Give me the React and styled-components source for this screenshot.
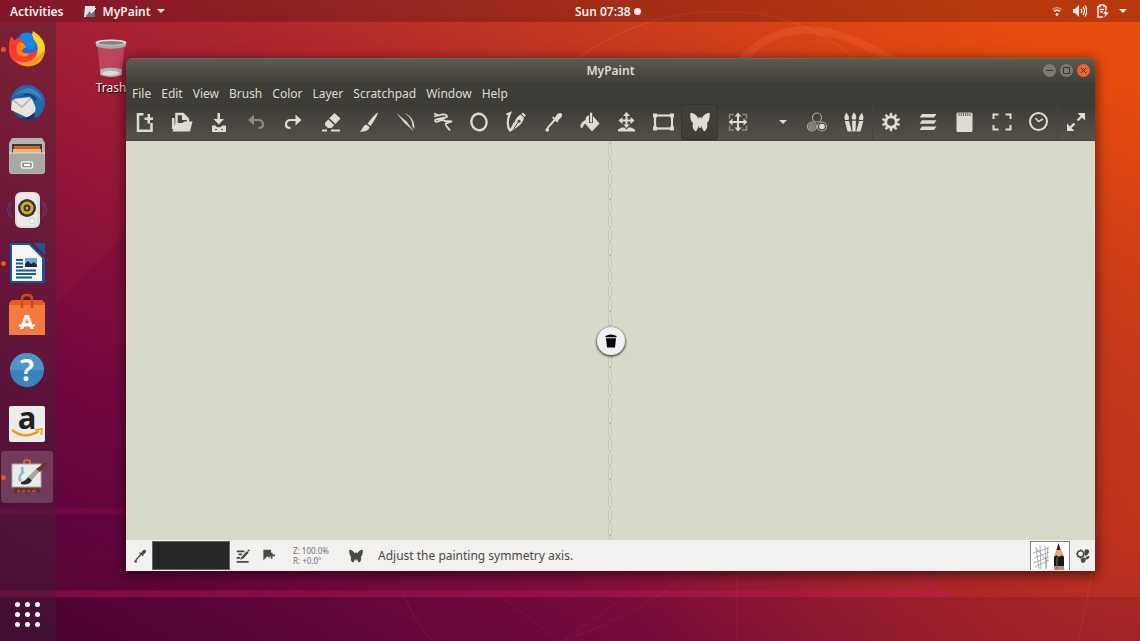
import styled, { createGlobalStyle } from "styled-components";

const GlobalStyle = createGlobalStyle`
  * {
    box-sizing: border-box;
  }
  body {
    margin: 0;
    font-family: "Noto Sans", "Open Sans", sans-serif;
    font-size: 12px;
    overflow: hidden;
  }
  button {
    font: inherit;
    color: inherit;
    padding: 0;
    border: 0;
    background: none;
    cursor: pointer;
  }
  svg {
    display: block;
    flex: none;
  }
`;

/* ---------- toolbar icons, 20x20 ---------- */

const Stroke = (props) => (
  <g fill="none" stroke="currentColor" strokeWidth="2" {...props} />
);

const icons = {
  newFile: (
    <>
      <Stroke strokeWidth="2.500">
        <path d="M8.500 2.200H3V18.800H16.500V11" />
      </Stroke>
      <path d="M9.500 5.500h3v-3.500h2.500v3.500h3v2.500h-3v3.500h-2.500v-3.500h-3z" />
    </>
  ),
  open: (
    <>
      <Stroke strokeWidth="2.400">
        <path d="M4.500 14V2H11L16 7V10" />
      </Stroke>
      <path d="M10 1.500V8H16.500ZM0 6H2.500V17H0ZM3.500 11H10.500L12 9.500H20.500L18 19.500H0.500Z" />
    </>
  ),
  save: (
    <>
      <path d="M8.500 1h2.500v6h4l-5.200 5.500L4.500 7h4z" />
      <path d="M3 13.500H6.500l1.500 1.800h3.500L13.500 13.500H17v6.500H3Z" />
      <path d="M6 17.500h2M12 17.500h2" stroke="#55524a" strokeWidth="1.200" />
    </>
  ),
  undo: (
    <>
      <Stroke strokeWidth="2.200">
        <path d="M5 8H12C15.500 8 17 10 17 12.500S15.500 16 12.500 16" />
      </Stroke>
      <path d="M2 8L8 2.500V13.500Z" />
    </>
  ),
  redo: (
    <>
      <Stroke strokeWidth="2.200">
        <path d="M15 8H8C4.500 8 3 10 3 12.500S4.500 16 7.500 16" />
      </Stroke>
      <path d="M18.500 8L12.500 2.500V13.500Z" />
    </>
  ),
  eraser: (
    <>
      <path d="M14.500 1L20.500 6.500L15.500 12L9.200 6.300ZM8.200 7.500L14.200 13.100L11.600 16H8L5 13.200V11Z" />
      <path d="M2 17.500h5v2H2zM11 17.500h9v2h-9z" />
    </>
  ),
  brush: (
    <path d="M20.600 0.500L21 0.900C19.500 5 16.500 10 13.500 14L10.500 11.700C13.500 7.500 17 3 20.600 0.500ZM9.300 12.500L12.500 15C12 18.500 7.500 20.300 2.500 19.500C5.500 18.500 5.400 13.500 9.300 12.500Z" />
  ),
  lineCurve: (
    <>
      <path d="M2.500 1L12.500 9.500L20 19.500L10.500 11Z" />
      <path d="M10 1C17 3.500 20.800 9 20.500 17L18.500 14.500C18.500 9 16 4.500 10 1Z" />
    </>
  ),
  connected: (
    <Stroke strokeWidth="1.800" strokeLinejoin="round">
      <path d="M3 1.500L8.500 3.500M3 4.500L11 2.500C15 2 18 4.500 14.500 5.500L5 7.500C3 8.500 4.500 10.500 7 9.500C10 8 12 7 14 9L20.500 9.500L15 11.500C13.500 13 17 15.500 19 18.500" />
    </Stroke>
  ),
  ellipse: (
    <Stroke strokeWidth="2.400">
      <ellipse cx="11" cy="10" rx="7.600" ry="8.300" transform="rotate(-15 11 10)" />
    </Stroke>
  ),
  ink: (
    <>
      <Stroke strokeWidth="2.200">
        <path d="M1.500 2.500L5 1.200C2 8 2 15 5 18.500C7 18 7.500 15 9.500 11" />
      </Stroke>
      <path d="M17.800 0.500L21 3.500L19.600 5L16.400 2ZM15.500 2.500L19 5.800C18 11 15 14 7.200 18.500C9 12 9.500 6 15.500 2.500Z" />
      <path d="M8.500 17L13 10.500" stroke="#4b4942" strokeWidth="1" />
      <circle cx="14" cy="9.300" r="1.500" fill="#4b4942" />
    </>
  ),
  picker: (
    <g>
      <path d="M12.500 6.500C14 4 15.300 1 18.300 1C21 1.200 20.500 4.500 18.500 6.200L16 8.200L16.700 9L15.100 10.500L10 5.800L11.500 4.300Z" />
      <path
        d="M13 7.500L6.200 15.200L5 18"
        fill="none"
        stroke="currentColor"
        strokeWidth="2"
      />
      <circle cx="5.200" cy="18" r="1.800" />
    </g>
  ),
  fill: (
    <>
      <path d="M7 5L10 3V11H14V4L20.500 11.500L13 19.500L6 11.500L4.300 14C3.500 17 1 16.500 1.500 13.500C2 10.500 4 9.500 6.500 8Z" />
      <rect x="11" y="0.500" width="2.200" height="10" rx="1" />
    </>
  ),
  moveLayer: (
    <>
      <Stroke strokeWidth="2">
        <path d="M10.500 3V14M5 8.500H16" />
      </Stroke>
      <path d="M10.500 0l3.500 4h-7zM10.500 16l-3-3.500h6zM2.500 8.500l4-3.500v7zM18.500 8.500l-4-3.500v7zM2 19.500V17.500L6 15.500H8.500L10.500 17.500L12.500 15.500H15L19 17.500V19.500Z" />
    </>
  ),
  frame: (
    <>
      <Stroke strokeWidth="2.200">
        <rect x="2" y="3.500" width="17" height="13" />
      </Stroke>
      <path d="M0 1.500h4v4H0zM17 1.500h4v4h-4zM0 14.500h4v4H0zM17 14.500h4v4h-4z" />
    </>
  ),
  symmetry: (
    <path d="M0.400 1C3.500 0.600 7 3 8.600 7.200L8.500 4.800l1.500 1 1.500-1L11.400 7.200C13 3 16.500 0.600 19.600 1C20.200 4.500 19.300 9.600 16.800 11.300C18.300 13.500 16.700 18.300 14.200 19.400C12.700 18.200 11.700 15.800 11.300 13.600L10.700 16H9.300L8.700 13.600C8.300 15.800 7.300 18.200 5.800 19.400C3.300 18.300 1.700 13.500 3.200 11.300C0.700 9.600 -0.200 4.500 0.400 1Z" />
  ),
  pan: (
    <>
      <Stroke strokeWidth="1.500" opacity="0.450">
        <path d="M2.500 7V2.500H7M15 2.500H19.500V7M19.500 13.500V18H15M7 18H2.500V13.500" />
      </Stroke>
      <Stroke strokeWidth="2">
        <path d="M11 3V17M4 10H18" />
      </Stroke>
      <path d="M11 0.500l3.500 4h-7zM11 19.500l-3.500-4h7zM1.500 10l4-3.500v7zM20.500 10l-4-3.500v7z" />
    </>
  ),
  colors: (
    <>
      <circle cx="5" cy="14.500" r="3.500" opacity="0.400" />
      <circle cx="15" cy="14.500" r="2.800" />
      <Stroke strokeWidth="1.200" opacity="0.650">
        <circle cx="10" cy="5.500" r="4.500" />
        <circle cx="5" cy="14.500" r="4.500" />
        <circle cx="15" cy="14.500" r="4.500" />
      </Stroke>
    </>
  ),
  brushes: (
    <path d="M2.200 0.500C4 3 6 4.500 4.500 8H1.200C-0.500 5 1 3.500 2.200 0.500ZM10 0.200C11.500 2.500 13.300 4 11.800 7.500H8.300C6.800 4.500 8.500 3 10 0.200ZM18 0.500C18.700 3.500 20.500 5 18.800 8H15.500C14 4.500 16.500 3 18 0.500ZM0.800 9H5L7.800 19.500H3.500ZM8 8.700H12L11.500 19.500H8.500ZM15.200 9H19.300L16.500 19.500H12.200Z" />
  ),
  gear: (
    <>
      <circle
        cx="10"
        cy="10"
        r="5.200"
        fill="none"
        stroke="currentColor"
        strokeWidth="2.800"
      />
      {[0, 36, 72, 108, 144, 180, 216, 252, 288, 324].map((a) => (
        <path key={a} d="M8.500 4L9 0.800h2l0.500 3.200z" transform={`rotate(${a} 10 10)`} />
      ))}
    </>
  ),
  layers: (
    <path d="M4 2H18.500L16 5.500H1.500ZM4 8.300H18.500L16 11.800H1.500ZM4 14.600H18.500L16 18H1.500Z" />
  ),
  notepad: (
    <>
      <rect x="1.500" y="0.500" width="16" height="19.500" rx="1.500" />
      <path d="M4 0.500v3.500M6.200 0.500v3.500M8.400 0.500v3.500M10.600 0.500v3.500M12.800 0.500v3.500M15 0.500v3.500" stroke="#55524b" />
    </>
  ),
  corners: (
    <Stroke strokeWidth="2">
      <path d="M1.500 7V2.500H6.500M13.500 2.500H18.500V7M18.500 13V17.500H13.500M6.500 17.500H1.500V13" />
    </Stroke>
  ),
  clock: (
    <Stroke>
      <circle cx="9.500" cy="9.500" r="8.500" />
      <path d="M6.500 6L9.500 9.500L14 7" strokeWidth="1.500" />
    </Stroke>
  ),
  expand: (
    <>
      <Stroke strokeWidth="2.400">
        <path d="M11.500 8.500L17 3M8.500 11.500L3 17" />
      </Stroke>
      <path d="M11.500 1H19V8.500L16 5.500L14 3.500ZM1 11.500V19H8.500L5.500 16L3.500 14Z" />
    </>
  ),
  editBrush: (
    <path d="M1 2h11v2.500H1zM3.500 6.500h5v2.500h-5zM1 11.500h5v2.500H1zM1 17h17v2.500H1zM18 0.500l2 2L18.500 4l-2-2zM15.500 3l2.500 2.500L10.500 13.500l-4.500 2 2-4.500z" />
  ),
  bookmark: (
    <path d="M2 1H13V5.500H15V8H18.500V10.500H15V14H12.500V10.500H11V13L7.500 10.500L2 16.500Z" />
  ),
  brushSettings: (
    <>
      <Stroke strokeWidth="2.200">
        <circle cx="6.500" cy="7" r="4.500" />
      </Stroke>
      <path d="M5.700 0.500h1.600v2H5.700zM5.700 11.500h1.600v2H5.700zM0 6.200h2v1.600H0zM13 1C16.500-1 20 1 18.500 5C17.500 8 15 10 12.500 9.500C12 6 11.500 3.500 13 1ZM14 11.500L19 9.500C19.500 13 17 15.500 14 14.500ZM6.500 15C9 11.500 13.500 11 14 14.500C14 18.500 11 20.500 8 19.500Z" />
    </>
  ),
};

const Icon = ({ name, size = 20 }) => (
  <svg
    width={size}
    height={size}
    viewBox="0 0 20 20"
    fill="currentColor"
    overflow="visible"
    aria-hidden="true"
  >
    {icons[name]}
  </svg>
);

/* ---------- launcher icons, 36x36 ---------- */

const launchers = [
  {
    label: "Firefox",
    running: true,
    art: (
      <>
        <circle cx="18" cy="18" r="15" fill="#1b6fe0" />
        <path d="M12 3q12-5 18 7l-8 9-12-6z" fill="#1189e8" />
        <path d="M2 5l4 5q4-4 9-2l-2 4 5 3-5 4q2 5 8 3 7 0 9-8-1-8-7-13 9 2 12 12 3 12-7 19-10 6-19 1Q-1 28 0 17 0 10 2 5z" fill="#ff3b2f" />
        <path d="M10 11l4 1 3 4-5 3q2 5 9 3-4 6-11 2-5-5 0-13z" fill="#ff8a1c" />
        <path d="M24 0q13 8 12 19-2 16-17 16-5 0-9-3 12 1 17-7 4-9-1-15-4-5-2-10z" fill="#ffd42b" />
        <path d="M36 18q-1 13-13 17-10 2-17-6 11 5 19-1 7-3 11-10z" fill="#ff9420" />
      </>
    ),
  },
  {
    label: "Thunderbird",
    art: (
      <>
        <circle cx="19" cy="18" r="17" fill="#1b5fa5" />
        <path d="M3 14l19-2 6 13-9 8L2 25z" fill="#e9e5df" />
        <path d="M3 14l10 8 10-10" fill="none" stroke="#b9b1a8" strokeWidth="1.500" />
        <path d="M1 18Q2 6 12 1q10-3 17 3 9 8 6 18-3 9-12 13 5-8 3-16-3-8-11-9Q7 11 1 18z" fill="#2368ab" />
        <path d="M5 11q9-10 19-7 8 4 9 12-7-9-16-8-7-1-12 3z" fill="#3a84c2" />
        <path d="M15 10q7-2 12 5" fill="none" stroke="#123f7a" strokeWidth="2" />
        <path d="M11 33q9 0 14-5l1 5q-8 4-15 0z" fill="#202f70" />
      </>
    ),
  },
  {
    label: "Files",
    art: (
      <>
        <path d="M3 0h30l3 5v28q0 3-3 3H3q-3 0-3-3V5z" fill="#b4b4b1" />
        <rect x="3" y="6" width="30" height="9" fill="#413a36" />
        <path d="M5 8h26v8H5z" fill="#d1662b" />
        <path d="M4 11h28v5H4z" fill="#f2b27a" />
        <path d="M1 15h34v18q0 2-2 2H3q-2 0-2-2z" fill="#a8a8a5" />
        <path d="M0 15h36" stroke="#dcdcd9" />
        <rect x="12.500" y="24" width="11" height="6" rx="1" fill="#8d8d8a" stroke="#eee" strokeWidth="1.500" />
        <rect x="15" y="26" width="6" height="2" fill="#fff" />
      </>
    ),
  },
  {
    label: "Rhythmbox",
    art: (
      <>
        <path d="M3 9q-4 8 0 17M0 11q-3 7 0 13M33 9q4 8 0 17M36 11q3 7 0 13" fill="none" stroke="#59509b" opacity="0.700" />
        <rect x="6" y="0" width="25" height="36" rx="6" fill="#dddedb" />
        <rect x="8" y="1" width="20" height="33" rx="5" fill="#eeeeec" opacity="0.800" />
        <circle cx="18" cy="16" r="9" fill="#38332c" />
        <circle cx="18" cy="16" r="6.500" fill="#d6a62c" />
        <circle cx="18" cy="16" r="3.500" fill="#3c352a" />
        <circle cx="18" cy="16" r="1.500" fill="#aaa" />
        <circle cx="23" cy="29" r="2.500" fill="#fff" stroke="#ccc" />
      </>
    ),
  },
  {
    label: "LibreOffice Writer",
    running: true,
    art: (
      <>
        <path d="M1-2h20l15 15v25H1z" fill="#16588f" />
        <path d="M3 0h17l13 13v23H3z" fill="#f5f5f4" />
        <path d="M24-2h12v12z" fill="#1d5792" />
        <path d="M7 15h7M7 18.500h7M7 22h7M7 25.500h20M7 29h20M7 32.500h16" stroke="#195b93" strokeWidth="2" />
        <rect x="16" y="13" width="12" height="9" fill="#6da8d8" />
        <path d="M16 22v-3l3-3 3 3 3-2 3 3v2z" fill="#152b3b" />
      </>
    ),
  },
  {
    label: "Ubuntu Software",
    art: (
      <>
        <path d="M0 4l3-3h30l3 3v32H0z" fill="#e65c24" />
        <path d="M0 6h36v30H0z" fill="#f37b40" />
        <path d="M13 9V0q0-4 5-4t5 4v9" fill="none" stroke="#d24a16" strokeWidth="2.500" />
        <text x="18" y="30" textAnchor="middle" fontSize="20" fontWeight="700" fill="#fff">A</text>
        <path d="M10 26.500h16" stroke="#fff" strokeWidth="2" />
      </>
    ),
  },
  {
    label: "Help",
    art: (
      <>
        <circle cx="18" cy="18" r="17" fill="#3b83bd" />
        <path d="M1 18a17 17 0 0 1 34 0z" fill="#4f93c7" />
        <text x="18" y="29" textAnchor="middle" fontSize="30" fontWeight="600" fill="#fff">?</text>
      </>
    ),
  },
  {
    label: "Amazon",
    art: (
      <>
        <rect width="36" height="36" rx="2" fill="#ececeb" />
        <text x="18" y="23" textAnchor="middle" fontSize="31" fontWeight="700" fill="#222">a</text>
        <path d="M3 24q13 10 27 1" fill="none" stroke="#f39a17" strokeWidth="2.500" />
        <path d="M26 24l7-1-1 6" fill="none" stroke="#f39a17" strokeWidth="1.500" />
      </>
    ),
  },
  {
    label: "MyPaint",
    running: true,
    active: true,
    art: (
      <>
        <path d="M15 6V3q0-2 3-2t3 2v3" fill="none" stroke="#e0602f" strokeWidth="2" />
        <path d="M8 28l-2 6M28 28l2 6M10 31h16M18 28v7" stroke="#6b2c20" strokeWidth="3" />
        <path d="M8 32h20" stroke="#b14b28" strokeDasharray="3 2" strokeWidth="2" />
        <rect x="3" y="5" width="29" height="23" fill="#e9ecea" stroke="#a5aaa4" />
        <path d="M14 8q-2 3 0 5q-6 6-2 9" fill="none" stroke="#7ba9cc" strokeWidth="2.500" opacity="0.800" />
        <path d="M12 23q5-1 7-5l4 3q-3 6-11 4z" fill="#262c36" />
        <path d="M19 18L28 9l3 3-8 9z" fill="#a3a59f" />
        <path d="M27 10L37 3l1 2-7 8z" fill="#6a3520" />
      </>
    ),
  },
];

const LauncherArt = ({ children }) => (
  <svg width="36" height="36" viewBox="0 0 36 36" overflow="visible" aria-hidden="true">
    {children}
  </svg>
);

const Backdrop = () => (
  <Wallpaper viewBox="0 0 1140 641" preserveAspectRatio="none" aria-hidden="true">
    <g fill="none">
      <path d="M0 511H400" stroke="#b30c62" strokeWidth="7" opacity="0.250" />
      <path d="M0 594H944L904 568" stroke="#c4185a" strokeWidth="7" opacity="0.350" />
      <path d="M740 62q55-64 155 0" stroke="#ff8442" strokeWidth="8" opacity="0.180" />
      <path d="M575 60q70-50 145-48 75-5 140 50" stroke="#ff8040" opacity="0.250" />
      <path d="M404 596q25 60 70 64M500 596l60 46 60-42M737 560v90M838 596q-10 30-40 50M690 570q-40 40-130 72" stroke="#dd315b" opacity="0.250" />
      <path d="M1098 430q8 100-22 220" stroke="#ff7742" opacity="0.200" />
    </g>
    <path d="M56 305L160 195V550H56Z" fill="#50004a" opacity="0.120" />
    <path d="M0 597H1140V641H0Z" fill="#350035" opacity="0.140" />
  </Wallpaper>
);

const menus = ["File", "Edit", "View", "Brush", "Color", "Layer", "Scratchpad", "Window", "Help"];

const tools = [
  ["newFile", "New"],
  ["open", "Open"],
  ["save", "Save"],
  ["undo", "Undo"],
  ["redo", "Redo"],
  ["eraser", "Eraser"],
  ["brush", "Freehand painting"],
  ["lineCurve", "Lines and curves"],
  ["connected", "Connected lines"],
  ["ellipse", "Ellipse"],
  ["ink", "Inking"],
  ["picker", "Pick color"],
  ["fill", "Flood fill"],
  ["moveLayer", "Move layer"],
  ["frame", "Edit frame"],
  ["symmetry", "Edit symmetry axis"],
  ["pan", "Pan view"],
];

const panels = [
  ["colors", "Colors"],
  ["brushes", "Brushes"],
  ["gear", "Tool options", true],
  ["layers", "Layers"],
  ["notepad", "Scratchpad"],
  ["corners", "Fit view"],
  ["clock", "Recent"],
  ["expand", "Fullscreen", true],
];

const TopBar = () => (
  <StTopBar>
    <TopLeft>
      <TopButton>Activities</TopButton>
      <TopButton>
        <svg width="13" height="13" viewBox="0 0 13 13" aria-hidden="true">
          <path d="M1 1h10v11H0z" fill="#dde2e2" />
          <path d="M2 11l4-5 1 3 4-4v7H2z" fill="#67717a" />
          <path d="M7 8l5-5" stroke="#fff" />
        </svg>
        MyPaint
        <Caret />
      </TopButton>
    </TopLeft>
    <TopButton>
      Sun 07:38
      <NoticeDot />
    </TopButton>
    <TopRight aria-label="System menu">
      <svg width="12" height="14" viewBox="0 0 14 14" fill="none" stroke="#f2f0ed" strokeWidth="1.500" aria-hidden="true">
        <path d="M1.500 5.500q5.500-5 11 0" opacity="0.500" />
        <path d="M3.500 7.500q3.500-3 7 0" strokeWidth="2" />
        <path d="M7 9l2 2-2 2-2-2z" fill="#f2f0ed" strokeWidth="0" />
      </svg>
      <svg width="14" height="14" viewBox="0 0 14 14" fill="none" stroke="#f2f0ed" strokeWidth="1.300" aria-hidden="true">
        <path d="M0 5h2l4-4v12L2 9H0z" fill="#f2f0ed" strokeWidth="0" />
        <path d="M8 5q1.500 2 0 4M10 3q3 4 0 8M12 1.500q3.500 5.500 0 11" />
      </svg>
      <svg width="12" height="14" viewBox="0 0 12 14" fill="none" stroke="#f2f0ed" strokeWidth="1.500" aria-hidden="true">
        <path d="M6 13H1V2.500H3V1h4v1.500h2V6M3 5.500h4M3 8h3" />
        <path d="M9 6L6 10h2.500L7 13.500l5-5H9.500z" fill="#f2f0ed" strokeWidth="0" />
      </svg>
      <Caret />
    </TopRight>
  </StTopBar>
);

const Dock = () => (
  <StDock>
    <DockList>
      {launchers.map((app) => (
        <DockItem key={app.label} aria-label={app.label} $active={app.active}>
          {app.running && <RunDot />}
          <LauncherArt>{app.art}</LauncherArt>
        </DockItem>
      ))}
    </DockList>
    <AppsButton aria-label="Show applications">
      {Array.from({ length: 9 }, (_, i) => (
        <i key={i} />
      ))}
    </AppsButton>
  </StDock>
);

const TrashIcon = () => (
  <TrashItem>
    <svg width="32" height="39" viewBox="0 0 32 40" aria-hidden="true">
      <path d="M2 5l3 31q11 5 22 0l3-31z" fill="#d97890" opacity="0.450" />
      <path d="M5 31q11-3 22 0v6q-11 4-22 0z" fill="#b5b2ae" />
      <ellipse cx="16" cy="35" rx="9" ry="2.500" fill="#dededb" />
      <path d="M0 3q16-4 32 0l-1 5q-15 4-30 0z" fill="#aaa9a5" />
      <ellipse cx="16" cy="3.500" rx="15.500" ry="3" fill="#e4e4e0" />
      <ellipse cx="16" cy="4" rx="13" ry="2" fill="#83827f" />
    </svg>
    Trash
  </TrashItem>
);

const StatusBar = () => (
  <StStatus>
    <StatusButton $width={26} aria-label="Pick color">
      <Icon name="picker" size={14} />
    </StatusButton>
    <Swatch aria-label="Current color" />
    <StatusButton $width={26} aria-label="Edit brush">
      <Icon name="editBrush" size={14} />
    </StatusButton>
    <StatusButton $width={26} aria-label="Bookmark">
      <Icon name="bookmark" size={14} />
    </StatusButton>
    <ViewInfo>
      <span>Z: 100.0%</span>
      <span>R: +0.0°</span>
    </ViewInfo>
    <Icon name="symmetry" size={14} />
    <Hint>Adjust the painting symmetry axis.</Hint>
    <BrushPreview aria-label="Current brush">
      <svg width="36" height="28" viewBox="0 0 36 28" aria-hidden="true">
        <g fill="none" stroke="#999" strokeWidth="0.800">
          <path d="M4 5l3 22M8 3l1 24M13 4l1 23M16 4l-2 23M1 11l16-5M2 16l15-6M1 21l16-6M3 25l14-7M5 7l10 12" />
        </g>
        <path d="M26.500 2l-4.500 12v14h10V14z" fill="#e5ab73" />
        <path d="M26.500 1l-2 7h4z" fill="#222" />
        <path d="M22 15q2-3 5 0 3-3 5 0v9H22z" fill="#181818" />
        <path d="M22 24h10v4H22z" fill="#c58e73" />
        <path d="M25 15v13" stroke="#777" />
      </svg>
    </BrushPreview>
    <StatusButton $width={25} aria-label="Brush settings">
      <Icon name="brushSettings" size={14} />
    </StatusButton>
  </StStatus>
);

const PaintWindow = () => (
  <StWindow>
    <TitleBar>
      <Title>MyPaint</Title>
      <WindowControls>
        <Control aria-label="Minimize">
          <svg width="9" height="9" viewBox="0 0 9 9" stroke="currentColor">
            <path d="M1 4.500h7" />
          </svg>
        </Control>
        <Control aria-label="Maximize">
          <svg width="9" height="9" viewBox="0 0 9 9" stroke="currentColor" fill="none">
            <path d="M1.500 1.500h6v6h-6z" />
          </svg>
        </Control>
        <Control $close aria-label="Close">
          <svg width="9" height="9" viewBox="0 0 9 9" stroke="currentColor">
            <path d="M2 2l5 5M7 2l-5 5" />
          </svg>
        </Control>
      </WindowControls>
    </TitleBar>
    <MenuBar>
      {menus.map((m) => (
        <MenuButton key={m}>{m}</MenuButton>
      ))}
    </MenuBar>
    <Toolbar>
      {tools.map(([name, label]) => (
        <ToolButton
          key={name}
          aria-label={label}
          disabled={name === "undo"}
          $active={name === "symmetry"}
        >
          <Icon name={name} />
        </ToolButton>
      ))}
      <MoreButton aria-label="More tools">
        <Caret />
      </MoreButton>
      {panels.map(([name, label, divided]) => (
        <ToolButton key={name} aria-label={label} $divided={divided}>
          <Icon name={name} />
        </ToolButton>
      ))}
    </Toolbar>
    <Canvas>
      <Axis aria-hidden="true">
        <defs>
          <pattern id="dash" width="5" height="14" y="4" patternUnits="userSpaceOnUse">
            <rect x="0.500" y="0.500" width="3" height="11" rx="1" fill="#dcddd0" stroke="#c4c6b9" />
            <path d="M1 12.500h2" stroke="#b4b6aa" />
          </pattern>
        </defs>
        <rect width="5" height="100%" fill="url(#dash)" />
      </Axis>
      <AxisDelete aria-label="Remove symmetry axis">
        <svg width="12" height="14" viewBox="0 0 12 14" fill="#08080f" aria-hidden="true">
          <path d="M0.500 3.200V2Q6-1 11.500 2v1.200zM1 4.200h10L10 13.500H2z" />
        </svg>
      </AxisDelete>
    </Canvas>
    <StatusBar />
  </StWindow>
);

const App = () => {
  return (
    <Desktop>
      <GlobalStyle />
      <Backdrop />
      <TopBar />
      <Workspace>
        <Dock />
        <TrashIcon />
        <PaintWindow />
      </Workspace>
    </Desktop>
  );
};

export default App;

const Desktop = styled.div`
  position: relative;
  display: flex;
  flex-direction: column;
  height: 100vh;
  color: #f2f0ed;
  background:
    radial-gradient(ellipse 45% 70% at 100% 80%, rgba(205, 60, 15, 0.6), transparent),
    linear-gradient(
      to top right,
      #4c0330 0%,
      #620539 13%,
      #7a0b3e 25%,
      #971738 42%,
      #a82232 55%,
      #c5381f 73%,
      #e84c0e 92%
    );
`;

const Wallpaper = styled.svg`
  position: absolute;
  inset: 0;
  width: 100%;
  height: 100%;
`;

const StTopBar = styled.header`
  position: relative;
  display: flex;
  justify-content: space-between;
  height: 22px;
  padding: 0 13px 0 10px;
  background: rgba(40, 0, 10, 0.25);
  font-weight: 600;
`;

const TopLeft = styled.div`
  display: flex;
  gap: 20px;
`;

const TopButton = styled.button`
  display: flex;
  align-items: center;
  gap: 6px;
`;

const TopRight = styled.button`
  display: flex;
  align-items: center;
  gap: 10px;
`;

const Caret = styled.i`
  border: 4px solid transparent;
  border-top-color: currentColor;
  border-bottom: 0;
`;

const NoticeDot = styled.i`
  width: 7px;
  height: 7px;
  margin-left: -3px;
  border-radius: 50%;
  background: currentColor;
`;

const Workspace = styled.main`
  position: relative;
  flex: 1;
  display: flex;
`;

const StDock = styled.nav`
  display: flex;
  flex-direction: column;
  align-items: center;
  justify-content: space-between;
  width: 56px;
  padding: 1px 2px 10px 0;
  background: rgba(55, 40, 55, 0.35);
`;

const DockList = styled.div`
  display: flex;
  flex-direction: column;
  justify-content: space-between;
  height: 480px;
`;

const DockItem = styled.button`
  position: relative;
  display: grid;
  place-items: center;
  width: 52px;
  height: 52px;
  border-radius: 3px;
  background: ${(p) => (p.$active ? "rgba(255, 255, 255, 0.18)" : "none")};
`;

const RunDot = styled.i`
  position: absolute;
  left: 0;
  width: 5px;
  height: 5px;
  border-radius: 50%;
  background: #e95420;
`;

const AppsButton = styled.button`
  display: grid;
  grid-template-columns: repeat(3, 5px);
  gap: 5px;
  padding: 4px;

  i {
    height: 5px;
    border-radius: 50%;
    background: #fff;
  }
`;

const TrashItem = styled.div`
  display: flex;
  flex-direction: column;
  align-items: center;
  gap: 1px;
  padding: 17px 0 0 39px;
  text-shadow: 1px 1px 1px #000;
`;

const StWindow = styled.section`
  position: absolute;
  inset: 36px 45px 70px 126px;
  display: flex;
  flex-direction: column;
  border-radius: 6px 6px 0 0;
  overflow: hidden;
  color: #dfdbd2;
  box-shadow: 0 3px 12px 2px rgba(0, 0, 0, 0.5);
`;

const TitleBar = styled.div`
  display: grid;
  grid-template-columns: 1fr auto 1fr;
  align-items: center;
  height: 24px;
  padding: 0 5px;
  background: linear-gradient(#5c5a52, #403f39);
  border-top: 1px solid #6a675e;
`;

const Title = styled.h1`
  grid-column: 2;
  margin: 0;
  font-size: 12px;
  font-weight: 600;
`;

const WindowControls = styled.div`
  display: flex;
  justify-self: end;
  gap: 4px;
`;

const Control = styled.button`
  display: grid;
  place-items: center;
  width: 13px;
  height: 13px;
  border-radius: 50%;
  color: #37352f;
  background: ${(p) => (p.$close ? "#ef6030" : "#7b7a73")};
`;

const MenuBar = styled.div`
  display: flex;
  gap: 10px;
  height: 22px;
  padding: 0 6px;
  background: #3d3c37;
`;

const MenuButton = styled.button``;

const Toolbar = styled.div`
  display: flex;
  height: 37px;
  padding-right: 1px;
  background: linear-gradient(#3b3a35, #54514a);
  border-bottom: 1px solid #45433d;
`;

const ToolButton = styled.button`
  display: grid;
  place-items: center;
  width: 37px;
  border-radius: 4px;

  ${(p) =>
    p.$divided &&
    `
    border-radius: 0;
    box-shadow: inset 1px 0 #45433d;
  `}

  ${(p) =>
    p.$active &&
    `
    background: #3f3e38;
    box-shadow: inset 0 0 0 1px #37352f;
  `}

  &:disabled {
    color: #8b8880;
  }
`;

const MoreButton = styled.button`
  flex: 1;
  display: flex;
  align-items: center;
  justify-content: flex-end;
  padding-right: 11px;
`;

const Canvas = styled.div`
  flex: 1;
  display: grid;
  place-items: center;
  background: #d8d9ca;
`;

const Axis = styled.svg`
  grid-area: 1 / 1;
  align-self: stretch;
  width: 5px;
  height: 100%;
`;

const AxisDelete = styled.button`
  grid-area: 1 / 1;
  display: grid;
  place-items: center;
  width: 28px;
  height: 28px;
  border-radius: 50%;
  background: #eff1f3;
  box-shadow: 0 1px 2px 1px rgba(50, 50, 45, 0.7);
`;

const StStatus = styled.footer`
  display: flex;
  align-items: center;
  height: 31px;
  color: #4a4945;
  background: #f2f1f0;
`;

const StatusButton = styled.button`
  display: grid;
  place-items: center;
  width: ${(p) => p.$width}px;
  height: 30px;
`;

const Swatch = styled.button`
  width: 78px;
  height: 29px;
  border: 1px solid #66645f;
  background: #272727;
`;

const ViewInfo = styled.div`
  display: flex;
  flex-direction: column;
  width: 67px;
  padding-left: 11px;
  font-size: 8px;
  line-height: 10px;
  color: #74726d;
`;

const Hint = styled.span`
  flex: 1;
  padding-left: 15px;
`;

const BrushPreview = styled.button`
  display: grid;
  place-items: end center;
  width: 40px;
  height: 29px;
  border: 1px solid #85837f;
  border-bottom: 0;
  background: #fff;
`;
